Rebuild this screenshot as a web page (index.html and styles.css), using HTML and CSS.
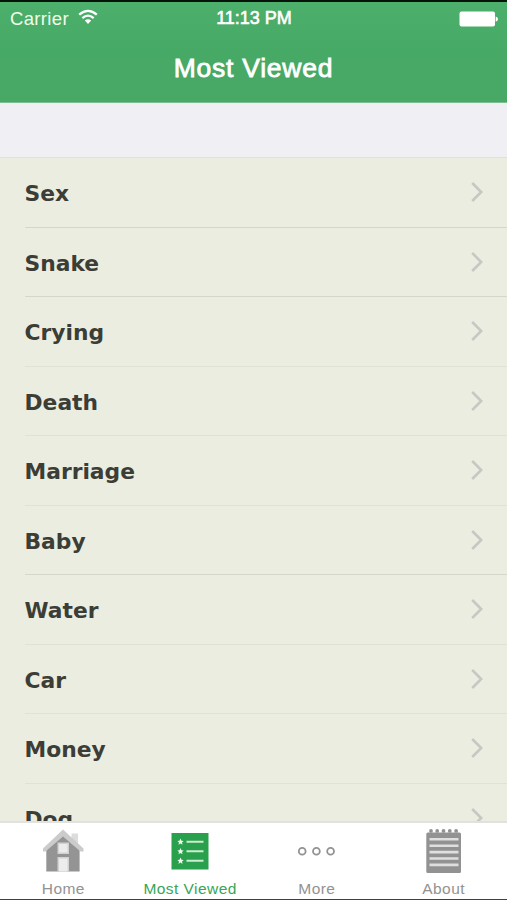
FILE: index.html
```html
<!DOCTYPE html>
<html lang="en">
<head>
<meta charset="utf-8">
<title>Most Viewed</title>
<link rel="stylesheet" href="styles.css">
</head>
<body>
<div class="phone">
  <header class="header">
    <div class="status">
      <div class="carrier"><span>Carrier</span>
        <svg class="wifi" width="20" height="16" viewBox="0 0 20 16"><g fill="none" stroke="#fff" stroke-width="2.3"><path d="M1.2 5.7Q10 -2 18.8 5.7"/><path d="M4.3 9.1Q10 4.2 15.7 9.1"/></g><path d="M6.8 11.6Q10 9 13.2 11.6L10 15Z" fill="#fff"/></svg>
      </div>
      <div class="time">11:13 PM</div>
      <div class="power"><svg width="39" height="16" viewBox="0 0 39 16"><rect x=".5" y=".5" width="35.5" height="15" rx="2" fill="#fff"/><path d="M36.7 5.5Q39 6 39 8T36.7 10.7Z" fill="#fff"/></svg></div>
    </div>
    <h1 class="title">Most Viewed</h1>
  </header>
  <main class="content">
    <ul class="list">
      <li class="row"><span>Sex</span><svg class="chevron" viewBox="0 0 12 20"><path d="M1.2 1L10.2 10L1.2 19"/></svg></li>
      <li class="row"><span>Snake</span><svg class="chevron" viewBox="0 0 12 20"><path d="M1.2 1L10.2 10L1.2 19"/></svg></li>
      <li class="row"><span>Crying</span><svg class="chevron" viewBox="0 0 12 20"><path d="M1.2 1L10.2 10L1.2 19"/></svg></li>
      <li class="row light"><span>Death</span><svg class="chevron" viewBox="0 0 12 20"><path d="M1.2 1L10.2 10L1.2 19"/></svg></li>
      <li class="row light"><span>Marriage</span><svg class="chevron" viewBox="0 0 12 20"><path d="M1.2 1L10.2 10L1.2 19"/></svg></li>
      <li class="row light"><span>Baby</span><svg class="chevron" viewBox="0 0 12 20"><path d="M1.2 1L10.2 10L1.2 19"/></svg></li>
      <li class="row"><span>Water</span><svg class="chevron" viewBox="0 0 12 20"><path d="M1.2 1L10.2 10L1.2 19"/></svg></li>
      <li class="row light"><span>Car</span><svg class="chevron" viewBox="0 0 12 20"><path d="M1.2 1L10.2 10L1.2 19"/></svg></li>
      <li class="row light"><span>Money</span><svg class="chevron" viewBox="0 0 12 20"><path d="M1.2 1L10.2 10L1.2 19"/></svg></li>
      <li class="row light"><span>Dog</span><svg class="chevron" viewBox="0 0 12 20"><path d="M1.2 1L10.2 10L1.2 19"/></svg></li>
    </ul>
  </main>
  <nav class="tabs">
    <div class="tab">
      <svg class="icon" width="44" height="48" viewBox="0 0 44 48"><path d="M5.3 20L22 5L38.6 20V43.5H5.3Z" fill="#949494"/><path d="M30.5 5.5H37V16H30.5Z" fill="#dcdcdc"/><path d="M22 1.5L42.5 20.5V23.5H39.5L22 8.5L4.5 23.5H2V20.5Z" fill="#cbcbcb"/><path d="M16.5 14.5H28V26H16.5ZM16.5 29H28V43.5H16.5Z" fill="#d2d2d2"/><path d="M18 16H26.5V24.5H18ZM18 30.5H26.5V43.5H18Z" fill="#ececec"/></svg>
      <span>Home</span>
    </div>
    <div class="tab active">
      <svg class="icon" width="44" height="48" viewBox="0 0 44 48"><rect x="3.5" y="5" width="37" height="36.5" fill="#29a04b"/><g stroke="#cfead5" stroke-width="2"><path d="M18.5 13.7H35.5M18.5 23.2H35.5M18.5 32.8H35.5"/></g><defs><path id="star" d="M0 -3.3L1 -1.1L3.2 -.9L1.5 .6L2 3L0 1.7L-2 3L-1.5 .6L-3.2 -.9L-1 -1.1Z" fill="#edf8ee"/></defs><use href="#star" x="12.5" y="13.8"/><use href="#star" x="12.5" y="23.3"/><use href="#star" x="12.5" y="32.9"/></svg>
      <span>Most Viewed</span>
    </div>
    <div class="tab">
      <svg class="icon" width="44" height="48" viewBox="0 0 44 48"><g fill="none" stroke="#929292" stroke-width="1.8"><circle cx="7.2" cy="23.2" r="3.4"/><circle cx="21.4" cy="23.2" r="3.4"/><circle cx="35.6" cy="23.2" r="3.4"/></g></svg>
      <span>More</span>
    </div>
    <div class="tab">
      <svg class="icon" width="44" height="48" viewBox="0 0 44 48"><rect x="4.3" y="4.5" width="34.7" height="40.5" rx="1.5" fill="#929292"/><g fill="#929292"><circle cx="9" cy="2.9" r="1.9"/><circle cx="15.2" cy="2.9" r="1.9"/><circle cx="21.5" cy="2.9" r="1.9"/><circle cx="27.8" cy="2.9" r="1.9"/><circle cx="34.1" cy="2.9" r="1.9"/></g><path d="M7.5 11.3H36.5M7.5 17.7H36.5M7.5 24.1H36.5M7.5 30.5H36.5M7.5 36.9H36.5" stroke="#dfdfdf" stroke-width="2.6"/></svg>
      <span>About</span>
    </div>
  </nav>
</div>
</body>
</html>
```
FILE: styles.css
```css
* { box-sizing: border-box; }
body { margin: 0; }
.phone {
  width: 507px;
  height: 900px;
  display: flex;
  flex-direction: column;
  overflow: hidden;
  border-top: 2px solid #06140a;
  border-bottom: 1px solid #404040;
  font-family: "Liberation Sans", Arial, sans-serif;
}
.header {
  flex: none;
  height: 101px;
  color: #fff;
  background: linear-gradient(#4caf6b, #47a966 50%, #47a965);
  border-bottom: 1px solid #7fbe93;
}
.status {
  height: 33px;
  display: grid;
  grid-template-columns: 1fr auto 1fr;
  align-items: center;
  padding: 0 9px 0 10px;
  font-size: 18.5px;
  line-height: 33px;
}
.carrier { display: flex; align-items: center; gap: 9px; letter-spacing: .35px; color: #f0ffea; }
.wifi { margin-top: -3px; }
.time { font-size: 18px; letter-spacing: 0; -webkit-text-stroke: .6px #fff; }
.power { display: flex; justify-content: flex-end; }
.title {
  margin: 0;
  font-size: 26.5px;
  font-weight: 400;
  line-height: 67px;
  text-align: center;
  letter-spacing: .75px;
  -webkit-text-stroke: .8px #fff;
}
.content { flex: 1; min-height: 0; overflow: hidden; background: #efeff4; padding-top: 54px; }
.list {
  margin: 0;
  padding: 0;
  list-style: none;
  background: #ebede0;
  border-top: 1px solid #e0e1df;
}
.row {
  height: 69.5px;
  margin-left: 24.5px;
  padding: 2px 24px 0 0;
  display: flex;
  align-items: center;
  justify-content: space-between;
  font: bold 21.8px "DejaVu Sans", Verdana, sans-serif;
  color: #3b3d36;
}
.row:first-child { height: 68.8px; }
.row + .row { border-top: 1px solid #d5d7cc; }
.row + .light { border-top-color: #e0e2d7; }
.chevron { width: 12px; height: 20px; margin-top: -3px; fill: none; stroke: #c7c8c4; stroke-width: 2.6; }
.tabs {
  flex: none;
  height: 78px;
  display: grid;
  grid-template-columns: repeat(4, 1fr);
  background: #fff;
  border-top: 2px solid #e1e2df;
}
.tab {
  display: flex;
  flex-direction: column;
  align-items: center;
  padding-top: 5px;
  color: #929292;
  font-size: 15.5px;
  line-height: 18px;
  letter-spacing: .45px;
}
.active { color: #36a657; }
.icon { display: block; margin-bottom: 4px; flex: none; }
```
